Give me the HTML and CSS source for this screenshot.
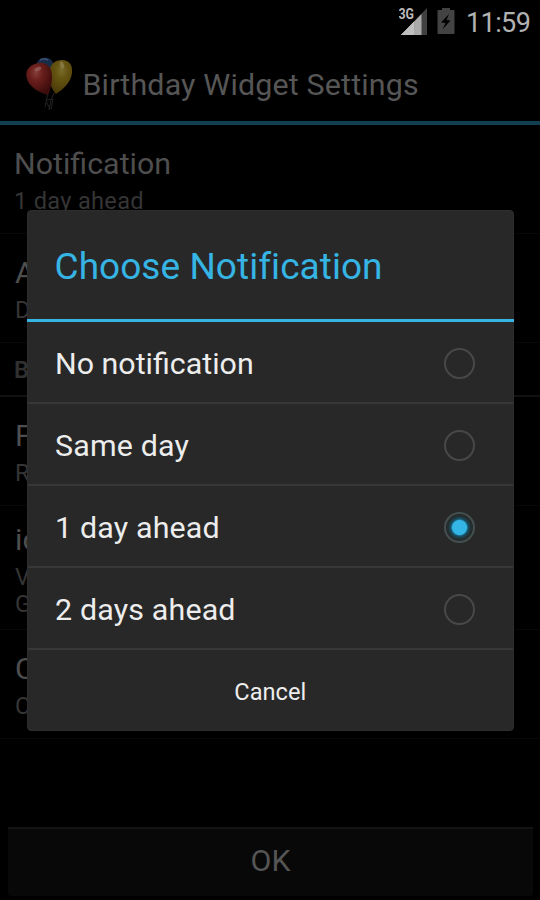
FILE: index.html
```html
<!DOCTYPE html>
<html lang="en">
<head>
<meta charset="utf-8">
<title>Birthday Widget Settings</title>
<link rel="stylesheet" href="styles.css">
</head>
<body>
<div class="screen">
  <div class="status">
    <svg class="signal" width="30" height="30" viewBox="0 0 30 30">
      <defs><linearGradient id="sig"><stop offset="0" stop-color="#c4c4c4"/><stop offset=".35" stop-color="#bdbdbd"/><stop offset=".5" stop-color="#999"/><stop offset=".7" stop-color="#aaa"/></linearGradient></defs>
      <path d="M28 1V28H2Z" fill="#414141"/>
      <path d="M22.500 7V28H2Z" fill="url(#sig)"/>
      <path d="M0 0H15V13H0Z" fill="#000"/>
      <path d="M15 13V14.500L2 28H15Z" fill="#c0c0c0"/>
      <text class="network" x="-.5" y="12" textLength="15.500" lengthAdjust="spacingAndGlyphs">3G</text>
    </svg>
    <svg class="battery" width="18" height="27" viewBox="0 0 18 27">
      <path d="M5 0H13V2H16.500Q17.500 2 17.500 3V25Q17.500 26 16.500 26H1.500Q.5 26 .5 25V3Q.5 2 1.500 2H5Z" fill="#434343"/>
      <path d="M12 6L4 14.500L8.500 15L5.500 21.500L13.500 12.500L9.500 12Z" fill="#000"/>
    </svg>
    <span class="clock">11:59</span>
  </div>
  <header class="bar">
    <svg class="balloons" width="50" height="56" viewBox="0 0 50 56">
      <defs>
        <radialGradient id="red" cx=".38" cy=".3" r=".7"><stop offset="0" stop-color="#84403a"/><stop offset=".35" stop-color="#6b1f1c"/><stop offset="1" stop-color="#3c0c0c"/></radialGradient>
        <radialGradient id="yellow" cx=".55" cy=".3" r=".7"><stop offset="0" stop-color="#7a6c30"/><stop offset=".35" stop-color="#665511"/><stop offset="1" stop-color="#4a3a08"/></radialGradient>
      </defs>
      <ellipse cx="20" cy="9" rx="8.500" ry="7.500" fill="#182b48"/>
      <path d="M15 4Q19 2 23 4" stroke="#3d5070" stroke-width="1.500" fill="none"/>
      <path d="M37 4C44 4 48 9 47 17C46 27 37 34 31 38C27 34 23 24 24 16C25 8 30 4 37 4Z" fill="url(#yellow)"/>
      <path d="M14 7C21 6 27 11 27 20C27 29 25 35 23 39C15 37 3 31 1.500 21C0 13 6 8 14 7Z" fill="url(#red)"/>
      <ellipse cx="13" cy="13" rx="3.500" ry="2" transform="rotate(-25 13 13)" fill="#a77770" opacity=".5"/>
      <ellipse cx="37" cy="9" rx="2" ry="3.500" transform="rotate(-15 37 9)" fill="#aaa078" opacity=".4"/>
      <path d="M23 38L21 45L25 53M29 37L26 44L24 54M22 44L28 43L26 53M21 46L20 51" stroke="#242424" stroke-width="1" fill="none"/>
    </svg>
    <h1 class="bar-title">Birthday Widget Settings</h1>
  </header>
  <main class="prefs">
    <section class="pref first"><div class="name">Notification</div><div class="summary">1 day ahead</div></section>
    <section class="pref"><div class="name">A</div><div class="summary">D</div></section>
    <h2 class="category">B</h2>
    <section class="pref"><div class="name">F</div><div class="summary">R</div></section>
    <section class="pref tall"><div class="name">ic</div><div class="summary">V<br>G</div></section>
    <section class="pref last"><div class="name">C</div><div class="summary">C</div></section>
  </main>
  <footer class="footer"><div class="ok">OK</div></footer>
  <div class="dialog">
    <h2 class="dialog-title">Choose Notification</h2>
    <div class="option"><span>No notification</span><i class="radio"></i></div>
    <div class="option spaced"><span>Same day</span><i class="radio"></i></div>
    <div class="option spaced"><span>1 day ahead</span><i class="radio on"></i></div>
    <div class="option spaced"><span>2 days ahead</span><i class="radio"></i></div>
    <div class="cancel">Cancel</div>
  </div>
</div>
</body>
</html>
```
FILE: styles.css
```css
* { box-sizing: border-box; }
body { margin: 0; background: #000; font-family: Roboto, "Liberation Sans", sans-serif; }
h1, h2 { margin: 0; font-weight: 400; }
.screen { position: relative; width: 540px; height: 900px; overflow: hidden; background: #000; display: flex; flex-direction: column; }
.status { height: 42px; display: flex; align-items: flex-start; padding-left: 399px; }
.signal { margin-top: 7px; flex: none; }
.battery { margin: 8px 0 0 8px; flex: none; }
.network { font-size: 14px; font-weight: 700; fill: #bbb; }
.clock { margin-left: 11px; font-size: 27px; line-height: 46px; letter-spacing: -.6px; color: #b2b2b2; white-space: nowrap; }
.bar { height: 83px; display: flex; padding: 14px 0 0 25px; border-bottom: 4px solid #123f52; }
.balloons { flex: none; }
.bar-title { margin-left: 7.5px; font-size: 30.4px; line-height: 57px; letter-spacing: .16px; color: #565656; white-space: nowrap; }
.prefs { height: 614px; }
.pref { height: 109px; padding: 15px 15px 0; border-bottom: 1px solid #080808; }
.pref.first { padding-left: 14px; }
.pref.first .summary { letter-spacing: .3px; }
.pref.tall { height: 124px; padding-top: 10px; }
.name { font-size: 30.4px; line-height: 48px; color: #4e4e4e; }
.summary { font-size: 23.6px; line-height: 27px; color: #353535; }
.category { height: 54px; padding: 14px 14px 0; font-size: 23.6px; line-height: 27px; font-weight: 600; color: #303030; border-bottom: 2px solid #111; }
.footer { flex: 1; padding: 88px 7px 0 8px; }
.ok { height: 69px; border-top: 2px solid #131313; border-radius: 0 0 3px 3px; background: #080808; color: #555; font-size: 30.4px; line-height: 64px; text-align: center; }
.dialog { position: absolute; left: 27px; top: 210px; width: 486.5px; height: 521px; background: #282828; border: 1px solid #2d2d2d; border-radius: 4px; }
.dialog-title { height: 111px; margin: 0 -1px; padding-left: 27.5px; border-bottom: 3px solid #36b4e3; color: #36b4e3; font-size: 37px; line-height: 112px; letter-spacing: .05px; white-space: nowrap; }
.option { height: 82px; display: flex; align-items: center; justify-content: space-between; padding: 2px 38px 0 27px; border-bottom: 2px solid #373737; color: #ededed; font-size: 30.4px; white-space: nowrap; }
.spaced { letter-spacing: .16px; }
.radio { width: 31px; height: 31px; border: 2px solid #484848; border-radius: 50%; }
.radio.on { border-color: #43504f; background: radial-gradient(circle, #33b5e5 0 7px, #17536a 8.500px, #203439 11px, #282828 13px); }
.cancel { height: 80px; color: #ededed; font-size: 23.6px; line-height: 85px; text-align: center; }
```
